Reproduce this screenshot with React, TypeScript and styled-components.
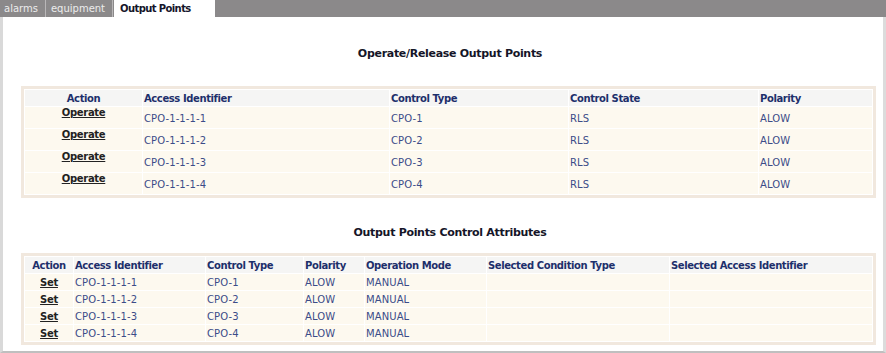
import * as React from 'react';
import styled, { createGlobalStyle } from 'styled-components';

const GlobalStyle = createGlobalStyle`
  html, body {
    margin: 0;
    padding: 0;
    background: #ffffff;
  }
  body {
    font-family: 'DejaVu Sans', Verdana, sans-serif;
    width: 886px;
    height: 353px;
    overflow: hidden;
  }
`;

const Page = styled.div`
  width: 886px;
  height: 353px;
  display: flex;
  flex-direction: column;
`;

const TabBar = styled.div`
  display: flex;
  height: 17px;
  background: #8b898a;
  flex-shrink: 0;
`;

const Tab = styled.div<{ $active?: boolean }>`
  display: flex;
  align-items: center;
  box-sizing: border-box;
  margin-right: 1px;
  padding: ${({ $active }) => ($active ? '0 0 0 6px' : '0 7px 0 4px')};
  width: ${({ $active }) => ($active ? '101px' : 'auto')};
  font-size: 10px;
  font-weight: ${({ $active }) => ($active ? 'bold' : 'normal')};
  letter-spacing: ${({ $active }) => ($active ? '-0.6px' : '0')};
  color: ${({ $active }) => ($active ? '#15152a' : '#ececec')};
  background: ${({ $active }) => ($active ? '#ffffff' : '#8b898a')};
  border-right: ${({ $active }) => ($active ? 'none' : '1px solid #b9b7b8')};
`;

const Panel = styled.div`
  flex-grow: 1;
  border-left: 3px solid #d9d9d9;
  border-right: 3px solid #dcdcdc;
  border-bottom: 2px solid #bfbfbf;
  background: #ffffff;
  padding: 0 7px 0 18px;
  box-sizing: border-box;
`;

const SectionTitle = styled.div<{ $top: number }>`
  margin-top: ${({ $top }) => $top}px;
  text-align: center;
  font-size: 11px;
  font-weight: bold;
  letter-spacing: -0.3px;
  color: #151528;
  line-height: 14px;
  padding-left: 3px;
`;

const Grid = styled.table<{ $top: number }>`
  margin-top: ${({ $top }) => $top}px;
  width: 855px;
  table-layout: fixed;
  border-collapse: separate;
  border-spacing: 1px;
  border: 3px solid #f1e8de;
  background: #ffffff;
  font-size: 10px;
`;

const HeadCell = styled.th<{ $center?: boolean }>`
  background: #f5f5f4;
  color: #1d2f6b;
  font-weight: bold;
  letter-spacing: -0.4px;
  text-align: ${({ $center }) => ($center ? 'center' : 'left')};
  padding: 0 1px;
  height: 16px;
  white-space: nowrap;
`;

const Cell = styled.td<{ $h: number; $center?: boolean; $top?: boolean }>`
  box-sizing: border-box;
  background: #fdf9ef;
  color: #3b4c88;
  height: ${({ $h }) => $h}px;
  line-height: 12px;
  padding: ${({ $top }) => ($top ? '0 1px' : '2px 1px 0')};
  text-align: ${({ $center }) => ($center ? 'center' : 'left')};
  vertical-align: ${({ $top }) => ($top ? 'top' : 'middle')};
  letter-spacing: 0.1px;
  white-space: nowrap;
`;

const ActionLink = styled.a`
  color: #222222;
  font-weight: bold;
  letter-spacing: -0.3px;
  text-decoration: underline;
  cursor: pointer;
`;

const operateRows = [1, 2, 3, 4].map((n) => ({
  aid: `CPO-1-1-1-${n}`,
  type: `CPO-${n}`,
  state: 'RLS',
  polarity: 'ALOW',
}));

const attrRows = [1, 2, 3, 4].map((n) => ({
  aid: `CPO-1-1-1-${n}`,
  type: `CPO-${n}`,
  polarity: 'ALOW',
  mode: 'MANUAL',
}));

export default function App() {
  return (
    <Page>
      <GlobalStyle />
      <TabBar>
        <Tab>alarms</Tab>
        <Tab>equipment</Tab>
        <Tab $active>Output Points</Tab>
      </TabBar>
      <Panel>
        <SectionTitle $top={30}>Operate/Release Output Points</SectionTitle>
        <Grid $top={25}>
          <colgroup>
            <col style={{ width: 117 }} />
            <col style={{ width: 246 }} />
            <col style={{ width: 178 }} />
            <col style={{ width: 189 }} />
            <col />
          </colgroup>
          <thead>
            <tr>
              <HeadCell $center>Action</HeadCell>
              <HeadCell>Access Identifier</HeadCell>
              <HeadCell>Control Type</HeadCell>
              <HeadCell>Control State</HeadCell>
              <HeadCell>Polarity</HeadCell>
            </tr>
          </thead>
          <tbody>
            {operateRows.map((r) => (
              <tr key={r.aid}>
                <Cell $h={21} $center $top>
                  <ActionLink>Operate</ActionLink>
                </Cell>
                <Cell $h={21}>{r.aid}</Cell>
                <Cell $h={21}>{r.type}</Cell>
                <Cell $h={21}>{r.state}</Cell>
                <Cell $h={21}>{r.polarity}</Cell>
              </tr>
            ))}
          </tbody>
        </Grid>
        <SectionTitle $top={28}>Output Points Control Attributes</SectionTitle>
        <Grid $top={13}>
          <colgroup>
            <col style={{ width: 48 }} />
            <col style={{ width: 131 }} />
            <col style={{ width: 97 }} />
            <col style={{ width: 60 }} />
            <col style={{ width: 121 }} />
            <col style={{ width: 182 }} />
            <col />
          </colgroup>
          <thead>
            <tr>
              <HeadCell $center>Action</HeadCell>
              <HeadCell>Access Identifier</HeadCell>
              <HeadCell>Control Type</HeadCell>
              <HeadCell>Polarity</HeadCell>
              <HeadCell>Operation Mode</HeadCell>
              <HeadCell>Selected Condition Type</HeadCell>
              <HeadCell>Selected Access Identifier</HeadCell>
            </tr>
          </thead>
          <tbody>
            {attrRows.map((r) => (
              <tr key={r.aid}>
                <Cell $h={16} $center>
                  <ActionLink>Set</ActionLink>
                </Cell>
                <Cell $h={16}>{r.aid}</Cell>
                <Cell $h={16}>{r.type}</Cell>
                <Cell $h={16}>{r.polarity}</Cell>
                <Cell $h={16}>{r.mode}</Cell>
                <Cell $h={16}></Cell>
                <Cell $h={16}></Cell>
              </tr>
            ))}
          </tbody>
        </Grid>
      </Panel>
    </Page>
  );
}
